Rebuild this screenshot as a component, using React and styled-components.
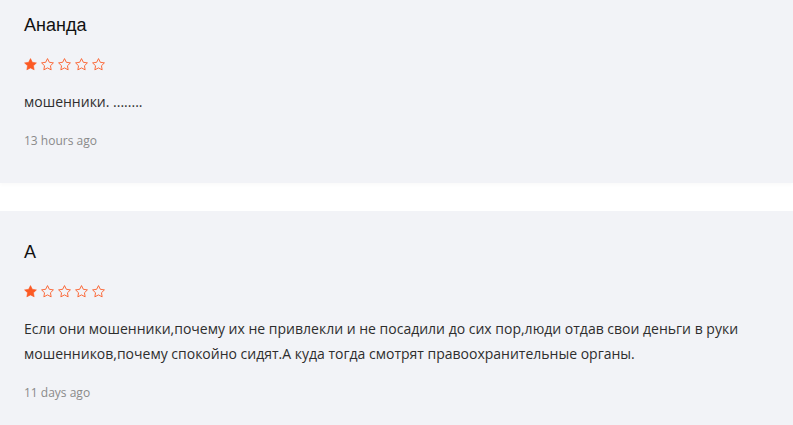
import React from "react";
import styled, { createGlobalStyle } from "styled-components";

const GlobalStyle = createGlobalStyle`
  html, body {
    margin: 0;
    padding: 0;
    background: #ffffff;
    overflow: hidden;
  }
`;

const List = styled.div`
  display: flex;
  flex-direction: column;
  gap: 28px;
  margin-top: -16px;
`;

const Card = styled.div`
  display: flex;
  flex-direction: column;
  padding: 29px 24px 33px;
  background-color: #f2f3f7;
  box-shadow: 0 2px 4px rgba(0, 0, 0, 0.025);
`;

const Name = styled.div`
  font-family: "Liberation Sans", Arial, sans-serif;
  font-size: 18px;
  line-height: 24px;
  color: #111111;
`;

const Stars = styled.div`
  display: flex;
  gap: 4px;
  margin-top: 21px;
  height: 13px;
`;

const Text = styled.p`
  margin: 18px 0 0;
  font-family: "Open Sans", sans-serif;
  font-size: 14px;
  line-height: 25px;
  color: #2e2e2e;
`;

const Date = styled.div`
  margin-top: 18px;
  font-family: "Open Sans", sans-serif;
  font-size: 12px;
  line-height: 18px;
  color: #8a8a8a;
`;

const STAR =
  "M12 2l3.09 6.26L22 9.27l-5 4.87 1.18 6.88L12 17.77l-6.18 3.25L7 14.14 2 9.27l6.91-1.01L12 2z";

const Star = ({ filled }) => (
  <svg width="13" height="13" viewBox="1 1 22 22">
    <path
      d={STAR}
      fill={filled ? "#fc5a24" : "none"}
      stroke="#fc5a24"
      strokeWidth={filled ? 1 : 1.5}
      strokeLinejoin="miter"
    />
  </svg>
);

const Rating = ({ value }) => (
  <Stars>
    {[1, 2, 3, 4, 5].map((i) => (
      <Star key={i} filled={i <= value} />
    ))}
  </Stars>
);

const reviews = [
  { name: "Ананда", rating: 1, text: "мошенники. ........", date: "13 hours ago" },
  {
    name: "А",
    rating: 1,
    text:
      "Если они мошенники,почему их не привлекли и не посадили до сих пор,люди отдав свои деньги в руки мошенников,почему спокойно сидят.А куда тогда смотрят правоохранительные органы.",
    date: "11 days ago",
  },
];

const App = () => {
  return (
    <>
      <GlobalStyle />
      <List>
        {reviews.map((r, i) => (
          <Card key={i}>
            <Name>{r.name}</Name>
            <Rating value={r.rating} />
            <Text>{r.text}</Text>
            <Date>{r.date}</Date>
          </Card>
        ))}
      </List>
    </>
  );
};

export default App;
